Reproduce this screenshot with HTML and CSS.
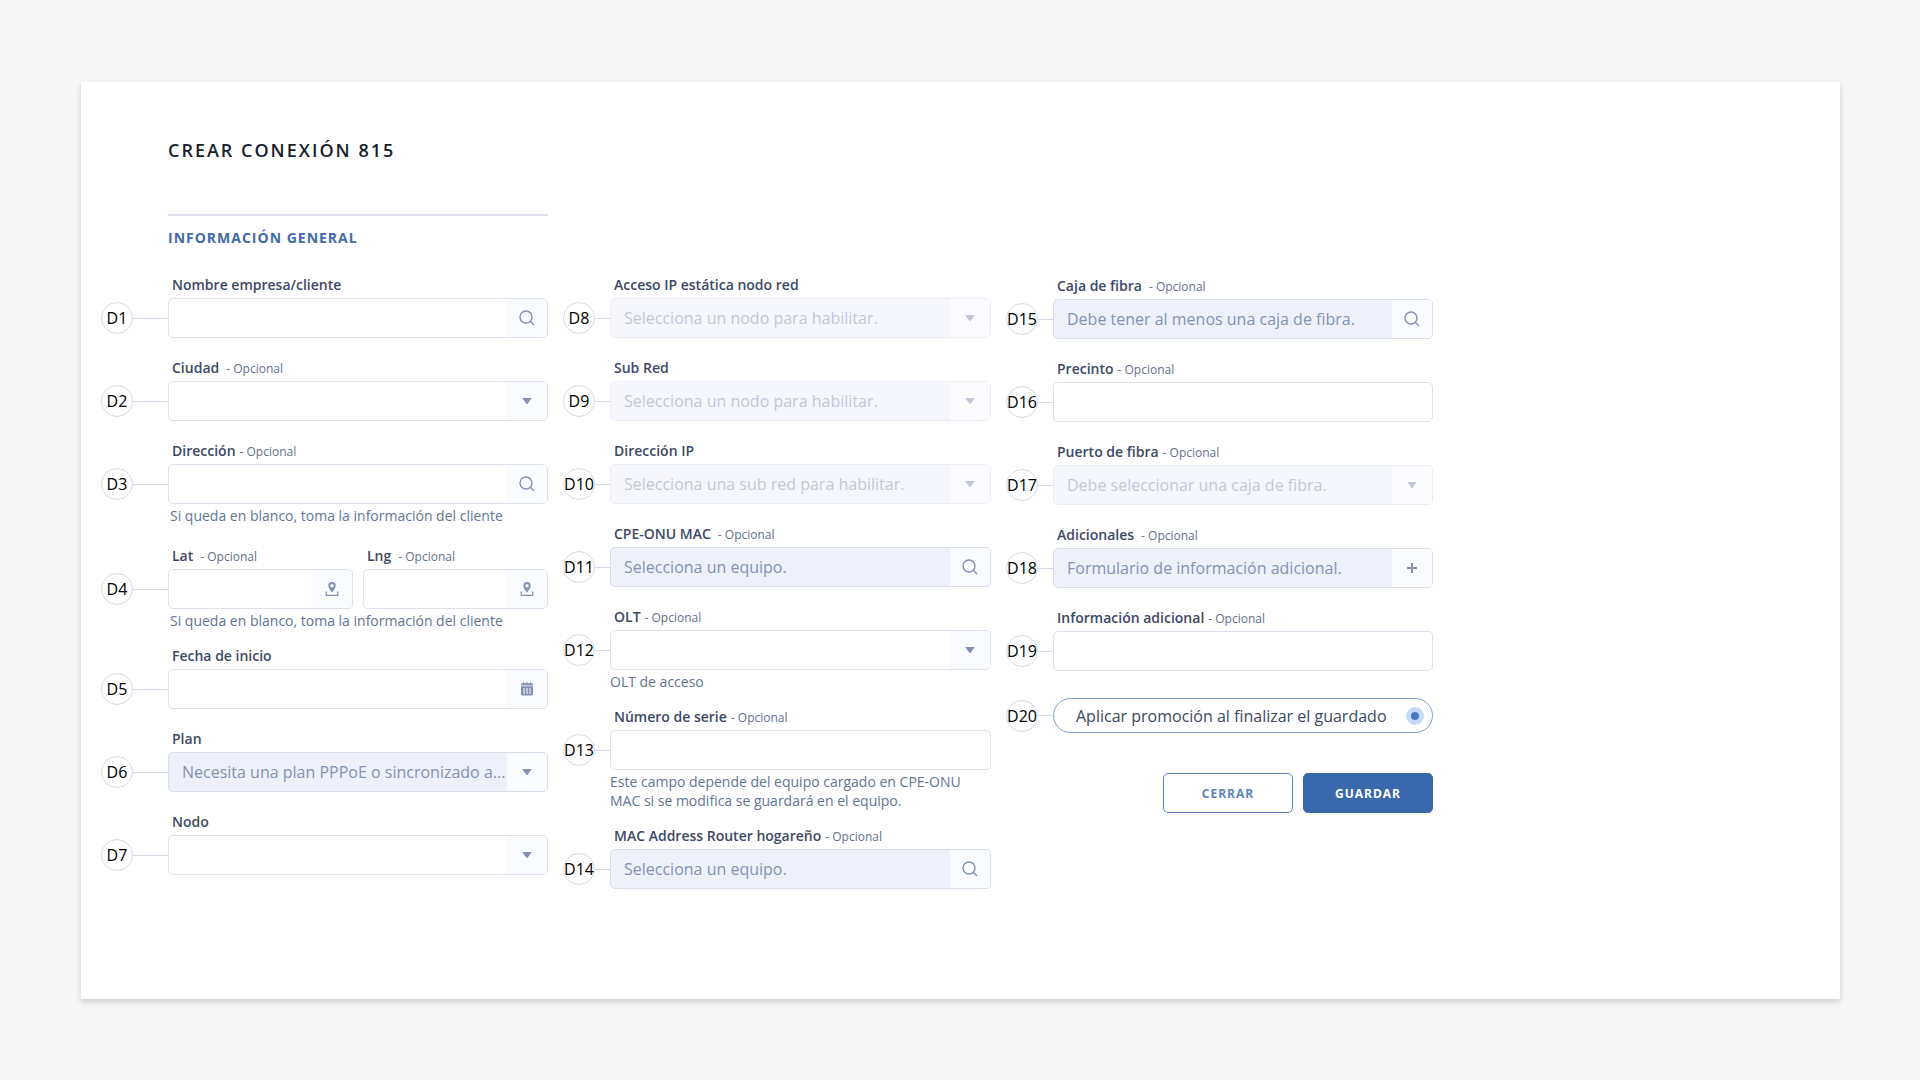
FILE: index.html
```
<!DOCTYPE html>
<html lang="es">
<head>
    <meta charset="UTF-8">
    <title>Crear conexión</title>
    <link rel="stylesheet" href="styles.css">
</head>
<body>
    <!-- iconos -->
    <svg class="sprite" aria-hidden="true">
        <symbol id="search" viewBox="0 0 16 16">
            <circle cx="7" cy="7" r="6" fill="none" stroke="currentColor" stroke-width="1.4"/>
            <path d="M11.3 11.3L15 15" fill="none" stroke="currentColor" stroke-width="1.4"/>
        </symbol>
        <symbol id="caret" viewBox="0 0 16 16">
            <path d="M3.2 5h9.6L8.8 10.4Q8 11.4 7.2 10.4Z" fill="currentColor"/>
        </symbol>
        <symbol id="pin" viewBox="0 0 16 16">
            <path d="M8 1a3.7 3.7 0 0 0-3.7 3.7C4.3 7.2 8 11.5 8 11.5S11.7 7.2 11.7 4.7A3.7 3.7 0 0 0 8 1Zm0 2a1.7 1.7 0 1 1 0 3.4A1.7 1.7 0 0 1 8 3Z" fill="currentColor"/>
            <path d="M3 11.2H2.2V14.3H13.8V11.2H13" fill="none" stroke="currentColor" stroke-width="1.2"/>
        </symbol>
        <symbol id="calendar" viewBox="0 0 16 16">
            <path d="M2 4.5V3.5Q2 2.3 3.2 2.3H12.8Q14 2.3 14 3.5V4.5ZM2 5.2H14V13Q14 14.5 12.5 14.5H3.5Q2 14.5 2 13Z" fill="currentColor"/>
            <path d="M4.5 1V3M8 1V3M11.5 1V3" stroke="currentColor" stroke-width="1"/>
            <path d="M4 8H6M7 8H9M10 8H12M4 10H6M7 10H9M10 10H12M4 12H6M7 12H9M10 12H12" stroke="#fafbff" stroke-width="1"/>
        </symbol>
        <symbol id="plus" viewBox="0 0 16 16">
            <path d="M8 3V13M3 8H13" stroke="currentColor" stroke-width="2"/>
        </symbol>
    </svg>

    <main class="card">
        <header class="header">
            <h1>CREAR CONEXIÓN 815</h1>
            <h2>INFORMACIÓN GENERAL</h2>
        </header>

        <form class="form">
            <div class="column first">
                <div class="field">
                    <span class="marker"><b>D1</b></span>
                    <label for="cliente">Nombre empresa/cliente</label>
                    <div class="control">
                        <input type="text" id="cliente">
                        <button type="button" class="addon" aria-label="Buscar cliente"><svg><use href="#search"/></svg></button>
                    </div>
                </div>
                <div class="field">
                    <span class="marker"><b>D2</b></span>
                    <label for="ciudad" class="wide">Ciudad <small>- Opcional</small></label>
                    <div class="control">
                        <select id="ciudad"><option></option></select>
                        <span class="addon"><svg><use href="#caret"/></svg></span>
                    </div>
                </div>
                <div class="field">
                    <span class="marker"><b>D3</b></span>
                    <label for="direccion">Dirección <small>- Opcional</small></label>
                    <div class="control">
                        <input type="text" id="direccion">
                        <button type="button" class="addon" aria-label="Buscar dirección"><svg><use href="#search"/></svg></button>
                    </div>
                    <p class="help">Si queda en blanco, toma la información del cliente</p>
                </div>
                <div class="field coords">
                    <span class="marker"><b>D4</b></span>
                    <div class="pair">
                        <div>
                            <label for="lat" class="wide">Lat <small>- Opcional</small></label>
                            <div class="control">
                                <input type="text" id="lat">
                                <button type="button" class="addon" aria-label="Ubicar latitud"><svg><use href="#pin"/></svg></button>
                            </div>
                        </div>
                        <div>
                            <label for="lng" class="wide">Lng <small>- Opcional</small></label>
                            <div class="control">
                                <input type="text" id="lng">
                                <button type="button" class="addon" aria-label="Ubicar longitud"><svg><use href="#pin"/></svg></button>
                            </div>
                        </div>
                    </div>
                    <p class="help">Si queda en blanco, toma la información del cliente</p>
                </div>
                <div class="field">
                    <span class="marker"><b>D5</b></span>
                    <label for="fecha">Fecha de inicio</label>
                    <div class="control">
                        <input type="text" id="fecha">
                        <button type="button" class="addon" aria-label="Elegir fecha"><svg><use href="#calendar"/></svg></button>
                    </div>
                </div>
                <div class="field">
                    <span class="marker"><b>D6</b></span>
                    <label for="plan">Plan</label>
                    <div class="control filled">
                        <select id="plan"><option>Necesita una plan PPPoE o sincronizado a...</option></select>
                        <span class="addon"><svg><use href="#caret"/></svg></span>
                    </div>
                </div>
                <div class="field">
                    <span class="marker"><b>D7</b></span>
                    <label for="nodo">Nodo</label>
                    <div class="control">
                        <select id="nodo"><option></option></select>
                        <span class="addon"><svg><use href="#caret"/></svg></span>
                    </div>
                </div>
            </div>

            <div class="column">
                <div class="field">
                    <span class="marker"><b>D8</b></span>
                    <label for="acceso">Acceso IP estática nodo red</label>
                    <div class="control filled disabled">
                        <select id="acceso" disabled><option>Selecciona un nodo para habilitar.</option></select>
                        <span class="addon"><svg><use href="#caret"/></svg></span>
                    </div>
                </div>
                <div class="field">
                    <span class="marker"><b>D9</b></span>
                    <label for="subred">Sub Red</label>
                    <div class="control filled disabled">
                        <select id="subred" disabled><option>Selecciona un nodo para habilitar.</option></select>
                        <span class="addon"><svg><use href="#caret"/></svg></span>
                    </div>
                </div>
                <div class="field">
                    <span class="marker"><b>D10</b></span>
                    <label for="ip">Dirección IP</label>
                    <div class="control filled disabled">
                        <select id="ip" disabled><option>Selecciona una sub red para habilitar.</option></select>
                        <span class="addon"><svg><use href="#caret"/></svg></span>
                    </div>
                </div>
                <div class="field">
                    <span class="marker"><b>D11</b></span>
                    <label for="cpe" class="wide">CPE-ONU MAC <small>- Opcional</small></label>
                    <div class="control filled">
                        <input type="text" id="cpe" placeholder="Selecciona un equipo.">
                        <button type="button" class="addon" aria-label="Buscar equipo"><svg><use href="#search"/></svg></button>
                    </div>
                </div>
                <div class="field">
                    <span class="marker"><b>D12</b></span>
                    <label for="olt">OLT <small>- Opcional</small></label>
                    <div class="control">
                        <select id="olt"><option></option></select>
                        <span class="addon"><svg><use href="#caret"/></svg></span>
                    </div>
                    <p class="help">OLT de acceso</p>
                </div>
                <div class="field">
                    <span class="marker"><b>D13</b></span>
                    <label for="serie">Número de serie <small>- Opcional</small></label>
                    <div class="control">
                        <input type="text" id="serie">
                    </div>
                    <p class="help">Este campo depende del equipo cargado en CPE-ONU MAC si se modifica se guardará en el equipo.</p>
                </div>
                <div class="field">
                    <span class="marker"><b>D14</b></span>
                    <label for="router">MAC Address Router hogareño <small>- Opcional</small></label>
                    <div class="control filled">
                        <input type="text" id="router" placeholder="Selecciona un equipo.">
                        <button type="button" class="addon" aria-label="Buscar router"><svg><use href="#search"/></svg></button>
                    </div>
                </div>
            </div>

            <div class="column last">
                <div class="field">
                    <span class="marker"><b>D15</b></span>
                    <label for="caja" class="wide">Caja de fibra <small>- Opcional</small></label>
                    <div class="control filled">
                        <input type="text" id="caja" placeholder="Debe tener al menos una caja de fibra.">
                        <button type="button" class="addon" aria-label="Buscar caja"><svg><use href="#search"/></svg></button>
                    </div>
                </div>
                <div class="field">
                    <span class="marker"><b>D16</b></span>
                    <label for="precinto">Precinto <small>- Opcional</small></label>
                    <div class="control">
                        <input type="text" id="precinto">
                    </div>
                </div>
                <div class="field">
                    <span class="marker"><b>D17</b></span>
                    <label for="puerto">Puerto de fibra <small>- Opcional</small></label>
                    <div class="control filled disabled">
                        <select id="puerto" disabled><option>Debe seleccionar una caja de fibra.</option></select>
                        <span class="addon"><svg><use href="#caret"/></svg></span>
                    </div>
                </div>
                <div class="field">
                    <span class="marker"><b>D18</b></span>
                    <label for="adicionales" class="wide">Adicionales <small>- Opcional</small></label>
                    <div class="control filled">
                        <input type="text" id="adicionales" placeholder="Formulario de información adicional.">
                        <button type="button" class="addon" aria-label="Agregar"><svg><use href="#plus"/></svg></button>
                    </div>
                </div>
                <div class="field">
                    <span class="marker"><b>D19</b></span>
                    <label for="info">Información adicional <small>- Opcional</small></label>
                    <div class="control">
                        <input type="text" id="info">
                    </div>
                </div>
                <div class="field promo">
                    <span class="marker"><b>D20</b></span>
                    <label for="promo" class="pill">
                        Aplicar promoción al finalizar el guardado
                        <input type="radio" id="promo" checked>
                    </label>
                </div>
                <div class="actions">
                    <button type="button" class="btn">CERRAR</button>
                    <button type="submit" class="btn primary">GUARDAR</button>
                </div>
            </div>
        </form>
    </main>
</body>
</html>
```
FILE: styles.css
```
* {
    box-sizing: border-box;
    margin: 0;
    padding: 0;
}
body {
    min-height: 100vh;
    padding: 82px 80px 81px 81px;
    background-color: #f7f7f7;
    font-family: "Open Sans", "Noto Sans", sans-serif;
    font-size: 16px;
    color: #3d4963;
}
input, select, button {
    font: inherit;
}
.sprite {
    position: absolute;
    width: 0;
    height: 0;
}
.card {
    padding: 54px 20px 110px;
    background-color: #fff;
    box-shadow: 0 3px 6px rgba(0, 0, 0, .16);
}

/* titulos */
.header {
    max-width: 447px;
    margin-bottom: 27px;
    padding-left: 67px;
}
h1 {
    margin-bottom: 50px;
    line-height: 28px;
    font-size: 18px;
    font-weight: 600;
    letter-spacing: 2px;
    white-space: nowrap;
    color: #161e30;
}
h2 {
    padding-top: 12px;
    border-top: 2px solid #dde2ee;
    line-height: 20px;
    font-size: 14px;
    font-weight: 700;
    letter-spacing: 1px;
    color: #426aa8;
}

/* formulario */
.form {
    display: grid;
    grid-template-columns: minmax(0, 447px) minmax(0, 428px) minmax(0, 427px);
    column-gap: 15px;
    align-items: start;
}
.column {
    display: flex;
    flex-direction: column;
}
.last {
    padding-top: 1px;
}
.field {
    display: grid;
    grid-template-columns: 47px minmax(0, 1fr);
    grid-template-rows: 23px 40px;
    margin-bottom: 20px;
}
.first .field {
    grid-template-columns: 67px minmax(0, 1fr);
}
.field:has(.help) {
    margin-bottom: 16px;
}
.field:last-child {
    margin-bottom: 0;
}
.marker {
    grid-area: 2 / 1;
    display: flex;
    align-items: center;
}
.marker b {
    display: flex;
    flex: none;
    align-items: center;
    justify-content: center;
    width: 32px;
    height: 32px;
    border: 1px solid #d5dbe8;
    border-radius: 50%;
    font-weight: 400;
    color: #000;
}
.marker::after {
    content: "";
    flex: 1;
    height: 1px;
    background-color: #d5dbe8;
}
label {
    grid-column: 2;
    display: flex;
    align-items: baseline;
    gap: 4px;
    height: 23px;
    padding-left: 4px;
    line-height: 20px;
    font-size: 14px;
    font-weight: 600;
    white-space: nowrap;
}
label.wide {
    gap: 7px;
}
label small {
    font-size: 12px;
    font-weight: 400;
    color: #64708c;
}
.control {
    grid-column: 2;
    display: flex;
    height: 40px;
    border: 1px solid #dde2ee;
    border-radius: 5px;
    background-color: #fff;
    overflow: hidden;
}
.control input,
.control select {
    flex: 1;
    min-width: 0;
    padding-left: 13px;
    border: 0;
    outline: 0;
    background: none;
    appearance: none;
    color: #8491b3;
    opacity: 1;
}
.control input::placeholder {
    color: #8491b3;
}
.addon {
    display: flex;
    flex: none;
    align-items: center;
    justify-content: center;
    width: 40px;
    border: 0;
    background-color: #fafbff;
    color: #8491b3;
}
.addon svg {
    width: 16px;
    height: 16px;
}
.filled {
    border-color: #d8deeb;
    background-color: #eef1fa;
}
.disabled {
    opacity: .5;
}
.help {
    grid-column: 2;
    padding-top: 2px;
    line-height: 19px;
    font-size: 14px;
    color: #64748f;
}
.first .help {
    padding-left: 2px;
}

/* latitud y longitud */
.coords {
    padding-top: 5px;
}
.pair {
    grid-area: 1 / 2 / 3 / 3;
    display: grid;
    grid-template-columns: repeat(2, minmax(0, 1fr));
    gap: 10px;
}

/* promocion */
.promo {
    grid-template-rows: 35px;
    margin: 7px 0 40px;
}
.promo .marker {
    grid-row: 1;
}
.pill {
    align-items: center;
    justify-content: space-between;
    height: 35px;
    padding: 0 8px 0 22px;
    border: 1px solid #7f9fd0;
    border-radius: 18px;
    font-size: 16px;
    font-weight: 400;
}
.pill input {
    width: 18px;
    height: 18px;
    border: 5px solid #c6dafb;
    border-radius: 50%;
    appearance: none;
    background-color: #4a78c2;
}

/* botones */
.actions {
    display: flex;
    justify-content: flex-end;
    gap: 10px;
}
.btn {
    width: 130px;
    height: 40px;
    border: 1px solid #5f83bd;
    border-radius: 5px;
    background-color: #fff;
    font-size: 12px;
    font-weight: 700;
    letter-spacing: 1px;
    color: #5f83bd;
    cursor: pointer;
}
.primary {
    border-color: #3a68ad;
    background-color: #3a68ad;
    color: #fff;
}

@media (max-width: 1100px) {
    body {
        padding: 20px;
    }
    .form {
        grid-template-columns: minmax(0, 447px);
        row-gap: 20px;
    }
}
```
